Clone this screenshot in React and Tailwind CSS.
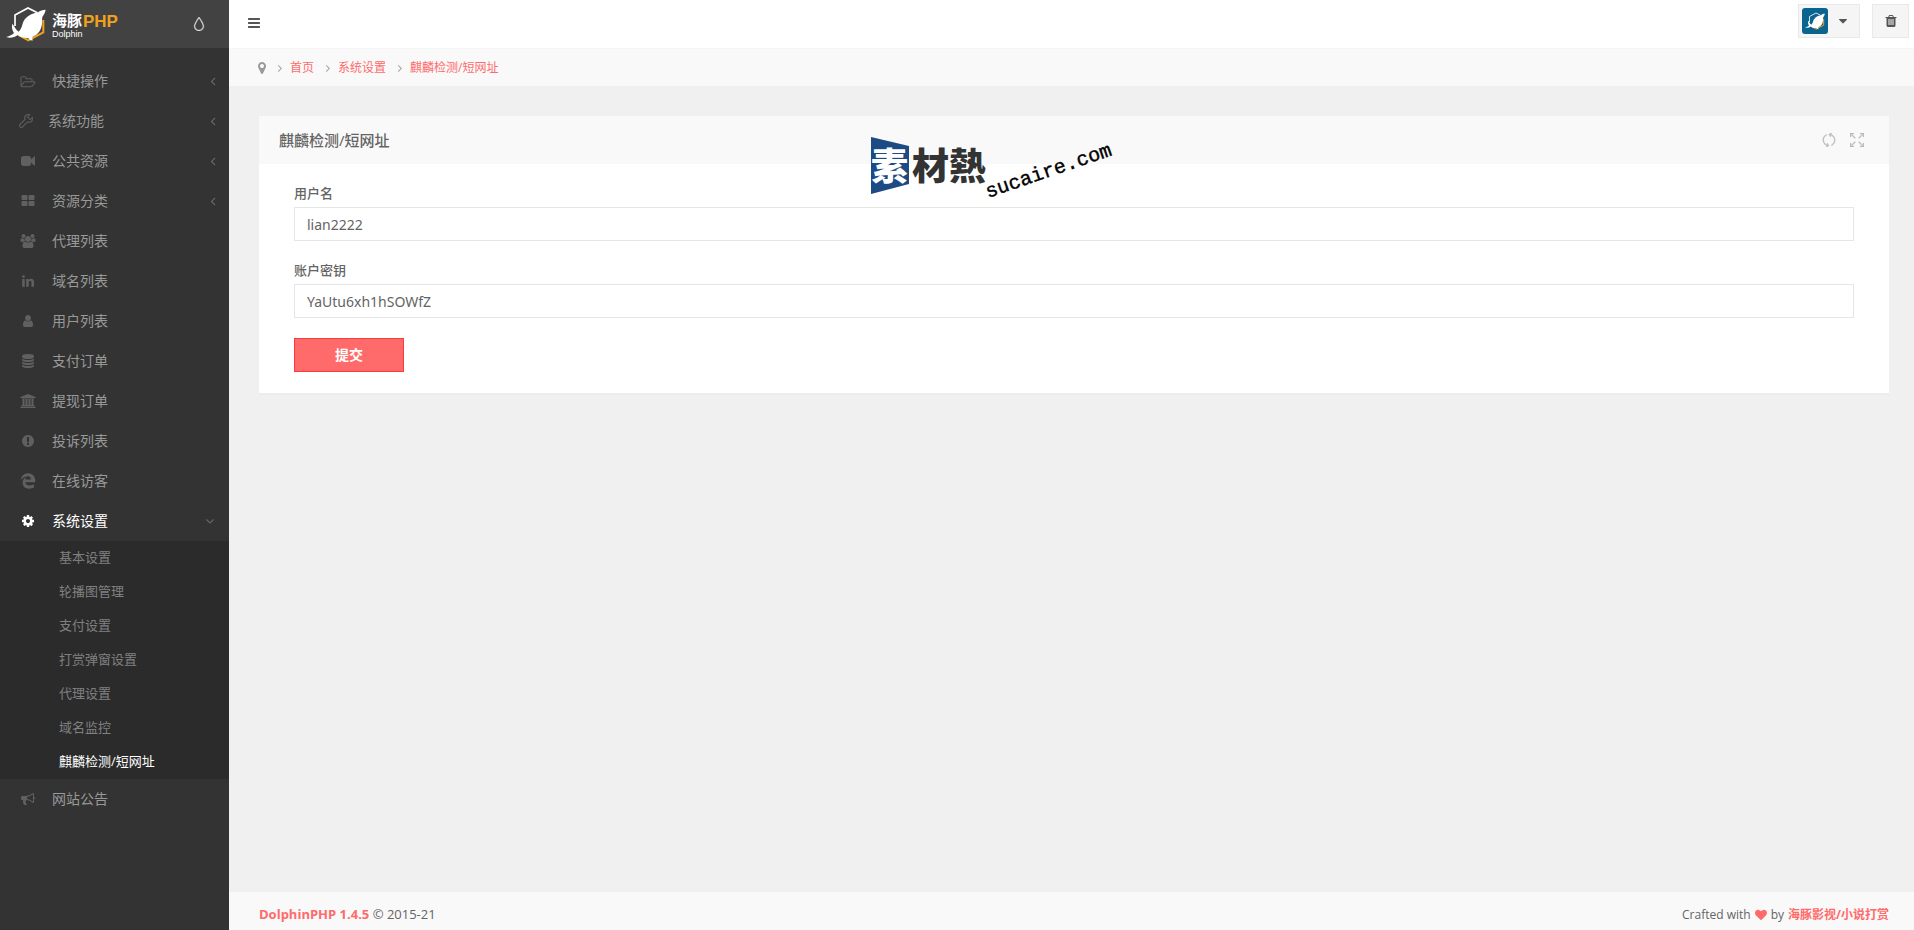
import { FaEdgeLegacy } from 'react-icons/fa';
import { SlDrop, SlRefresh, SlSizeFullscreen, SlWrench } from 'react-icons/sl';

const ICONS = {
  folderOpen:
    'M1781 1077q0-35-53-35h-1088q-40 0-85.5 21.5t-71.5 52.5l-294 363q-18 24-18 40 0 35 53 35h1088q40 0 86-22t71-53l294-363q18-22 18-39zm-1141-163h768v-160q0-40-28-68t-68-28h-576q-40 0-68-28t-28-68v-64q0-40-28-68t-68-28h-320q-40 0-68 28t-28 68v853l256-315q44-53 116-87.5t140-34.5zm1269 163q0 62-46 120l-295 363q-43 53-116 87.5t-140 34.5h-1088q-92 0-158-66t-66-158v-960q0-92 66-158t158-66h320q92 0 158 66t66 158v32h544q92 0 158 66t66 158v160h192q54 0 99 24.5t67 70.5q15 32 15 68z',
  video:
    'M1792 352v1088q0 42-39 59-13 5-25 5-27 0-45-19l-403-403v166q0 119-84.5 203.5t-203.5 84.5h-704q-119 0-203.5-84.5t-84.5-203.5v-704q0-119 84.5-203.5t203.5-84.5h704q119 0 203.5 84.5t84.5 203.5v165l403-402q18-19 45-19 12 0 25 5 39 17 39 59z',
  thLarge:
    'M832 1024v384q0 52-38 90t-90 38h-512q-52 0-90-38t-38-90v-384q0-52 38-90t90-38h512q52 0 90 38t38 90zm0-768v384q0 52-38 90t-90 38h-512q-52 0-90-38t-38-90v-384q0-52 38-90t90-38h512q52 0 90 38t38 90zm896 768v384q0 52-38 90t-90 38h-512q-52 0-90-38t-38-90v-384q0-52 38-90t90-38h512q52 0 90 38t38 90zm0-768v384q0 52-38 90t-90 38h-512q-52 0-90-38t-38-90v-384q0-52 38-90t90-38h512q52 0 90 38t38 90z',
  users:
    'M529 896q-162 5-265 128h-134q-82 0-138-40.5t-56-118.5q0-353 124-353 6 0 43.5 21t97.5 42.5 119 21.5q67 0 133-23-5 37-5 66 0 159 81 256zm1071 637q0 120-73 189.5t-194 69.5h-874q-121 0-194-69.5t-73-189.5q0-53 3.5-103.5t14-109 26.5-108.5 43-97.5 62-81 85.5-53.5 111.5-20q10 0 43 21.5t73 48 107 48 135 21.5 135-21.5 107-48 73-48 43-21.5q61 0 111.5 20t85.5 53.5 62 81 43 97.5 26.5 108.5 14 109 3.5 103.5zm-1024-1277q0 106-75 181t-181 75-181-75-75-181 75-181 181-75 181 75 75 181zm704 384q0 159-112.5 271.5t-271.5 112.5-271.5-112.5-112.5-271.5 112.5-271.5 271.5-112.5 271.5 112.5 112.5 271.5zm576 225q0 78-56 118.5t-138 40.5h-134q-103-123-265-128 81-97 81-256 0-29-5-66 66 23 133 23 59 0 119-21.5t97.5-42.5 43.5-21q124 0 124 353zm-128-609q0 106-75 181t-181 75-181-75-75-181 75-181 181-75 181 75 75 181z',
  linkedin:
    'M477 625v991h-330v-991h330zm21-306q1 73-50.5 122t-135.5 49h-2q-82 0-132-49t-50-122q0-74 51.5-122.5t134.5-48.5 133 48.5 51 122.5zm1166 729v568h-329v-530q0-105-40.5-164.5t-126.5-59.5q-63 0-105.5 34.5t-63.5 85.5q-11 30-11 81v553h-329q2-399 2-647t-1-296l-1-48h329v144h-2q20-32 41-56t56.5-52 87-43.5 114.5-15.5q171 0 275 113.5t104 332.5z',
  user:
    'M1536 1399q0 109-62.5 187t-150.5 78h-854q-88 0-150.5-78t-62.5-187q0-85 8.5-160.5t31.5-152 58.5-131 94-89 134.5-34.5q131 128 313 128t313-128q76 0 134.5 34.5t94 89 58.5 131 31.5 152 8.5 160.5zm-256-887q0 159-112.5 271.5t-271.5 112.5-271.5-112.5-112.5-271.5 112.5-271.5 271.5-112.5 271.5 112.5 112.5 271.5z',
  database:
    'M896 768q237 0 443-43t325-127v170q0 69-103 128t-280 93.5-385 34.5-385-34.5-280-93.5-103-128v-170q119 84 325 127t443 43zm0 768q237 0 443-43t325-127v170q0 69-103 128t-280 93.5-385 34.5-385-34.5-280-93.5-103-128v-170q119 84 325 127t443 43zm0-384q237 0 443-43t325-127v170q0 69-103 128t-280 93.5-385 34.5-385-34.5-280-93.5-103-128v-170q119 84 325 127t443 43zm0-1152q208 0 385 34.5t280 93.5 103 128v128q0 69-103 128t-280 93.5-385 34.5-385-34.5-280-93.5-103-128v-128q0-69 103-128t280-93.5 385-34.5z',
  university:
    'M896 0l960 384v128h-128q0 26-20.5 45t-48.5 19h-1526q-28 0-48.5-19t-20.5-45h-128v-128zm-704 640h256v768h128v-768h256v768h128v-768h256v768h128v-768h256v768h59q28 0 48.5 19t20.5 45v64h-1664v-64q0-26 20.5-45t48.5-19h59v-768zm1595 960q28 0 48.5 19t20.5 45v128h-1920v-128q0-26 20.5-45t48.5-19h1782z',
  exclamation:
    'M896 128q209 0 385.5 103t279.5 279.5 103 385.5-103 385.5-279.5 279.5-385.5 103-385.5-103-279.5-279.5-103-385.5 103-385.5 279.5-279.5 385.5-103zm128 1247v-190q0-14-9-23.5t-22-9.5h-192q-13 0-23 10t-10 23v190q0 13 10 23t23 10h192q13 0 22-9.5t9-23.5zm-2-344l18-621q0-12-10-18-10-8-24-8h-220q-14 0-24 8-10 6-10 18l17 621q0 10 10 17.5t24 7.5h185q14 0 23.5-7.5t10.5-17.5z',
  cog:
    'M1152 896q0-106-75-181t-181-75-181 75-75 181 75 181 181 75 181-75 75-181zm512-109v222q0 12-8 23t-20 13l-185 28q-19 54-39 91 35 50 107 138 10 12 10 25t-9 23q-27 37-99 108t-94 71q-12 0-26-9l-138-108q-44 23-91 38-16 136-29 186-7 28-36 28h-222q-14 0-24.5-8.5t-11.5-21.5l-28-184q-49-16-90-37l-141 107q-10 9-25 9-14 0-25-11-126-114-165-168-7-10-7-23 0-12 8-23 15-21 51-66.5t54-70.5q-27-50-41-99l-183-27q-13-2-21-12.5t-8-23.5v-222q0-12 8-23t19-13l186-28q14-46 39-92-40-57-107-138-10-12-10-24 0-10 9-23 26-36 98.5-107.5t94.5-71.5q13 0 26 10l138 107q44-23 91-38 16-136 29-186 7-28 36-28h222q14 0 24.5 8.5t11.5 21.5l28 184q49 16 90 37l142-107q9-9 24-9 13 0 25 10 129 119 165 170 7 8 7 22 0 12-8 23-15 21-51 66.5t-54 70.5q26 50 41 98l183 28q13 2 21 12.5t8 23.5z',
  bullhorn:
    'M1664 640q53 0 90.5 37.5t37.5 90.5-37.5 90.5-90.5 37.5v384q0 52-38 90t-90 38q-417-347-812-380-58 19-91 66t-31 100.5 40 92.5q-20 33-23 65.5t6 58 33.5 55 48 50 61.5 50.5q-29 58-111.5 83t-168.5 11.5-132-55.5q-7-23-29.5-87.5t-32-94.5-23-89-15-101 3.5-98.5 22-110.5h-122q-66 0-113-47t-47-113v-192q0-66 47-113t113-47h480q435 0 896-384 52 0 90 38t38 90v384zm-128 604v-954q-394 302-768 343v270q377 42 768 341z',
  marker:
    'M1152 640q0-106-75-181t-181-75-181 75-75 181 75 181 181 75 181-75 75-181zm256 0q0 109-33 179l-364 774q-16 33-47.5 52t-67.5 19-67.5-19-46.5-52l-365-774q-33-70-33-179 0-212 150-362t362-150 362 150 150 362z',
  bars:
    'M1664 1344v128q0 26-19 45t-45 19h-1408q-26 0-45-19t-19-45v-128q0-26 19-45t45-19h1408q26 0 45 19t19 45zm0-512v128q0 26-19 45t-45 19h-1408q-26 0-45-19t-19-45v-128q0-26 19-45t45-19h1408q26 0 45 19t19 45zm0-512v128q0 26-19 45t-45 19h-1408q-26 0-45-19t-19-45v-128q0-26 19-45t45-19h1408q26 0 45 19t19 45z',
  angleLeft:
    'M1203 544q0 13-10 23l-393 393 393 393q10 10 10 23t-10 23l-50 50q-10 10-23 10t-23-10l-466-466q-10-10-10-23t10-23l466-466q10-10 23-10t23 10l50 50q10 10 10 23z',
  angleRight:
    'M1171 960q0 13-10 23l-466 466q-10 10-23 10t-23-10l-50-50q-10-10-10-23t10-23l393-393-393-393q-10-10-10-23t10-23l50-50q10-10 23-10t23 10l466 466q10 10 10 23z',
  angleDown:
    'M1395 736q0 13-10 23l-466 466q-10 10-23 10t-23-10l-466-466q-10-10-10-23t10-23l50-50q10-10 23-10t23 10l393 393 393-393q10-10 23-10t23 10l50 50q10 10 10 23z',
  caretDown: 'M1408 704q0 26-19 45l-448 448q-19 19-45 19t-45-19l-448-448q-19-19-19-45t19-45 45-19h896q26 0 45 19t19 45z',
  heart:
    'M896 1664q-26 0-44-18l-624-602q-10-8-27.5-26t-55.5-65.5-68-97.5-53.5-121-23.5-138q0-220 127-344t351-124q62 0 126.5 21.5t120 58 95.5 68.5 76 68q36-36 76-68t95.5-68.5 120-58 126.5-21.5q224 0 351 124t127 344q0 221-229 450l-623 600q-18 18-44 18z',
  trash:
    'M704 1376v-704q0-14-9-23t-23-9h-64q-14 0-23 9t-9 23v704q0 14 9 23t23 9h64q14 0 23-9t9-23zm256 0v-704q0-14-9-23t-23-9h-64q-14 0-23 9t-9 23v704q0 14 9 23t23 9h64q14 0 23-9t9-23zm256 0v-704q0-14-9-23t-23-9h-64q-14 0-23 9t-9 23v704q0 14 9 23t23 9h64q14 0 23-9t9-23zm-544-992h448l-48-117q-7-9-17-11h-317q-10 2-17 11zm928 32v64q0 14-9 23t-23 9h-96v948q0 83-47 143.5t-113 60.5h-832q-66 0-113-58.5t-47-141.5v-952h-96q-14 0-23-9t-9-23v-64q0-14 9-23t23-9h309l70-167q15-37 54-63t79-26h320q40 0 79 26t54 63l70 167h309q14 0 23 9t9 23z',
};

// glyphs whose box is wider or narrower than the square em
const VIEW_BOXES = {
  folderOpen: '64 0 1792 1792',
  marker: '384 0 1024 1792',
  angleLeft: '384 0 1024 1792',
};

const menu = [
  { label: '快捷操作', icon: 'folderOpen', hasChildren: true },
  { label: '系统功能', icon: 'wrench', hasChildren: true },
  { label: '公共资源', icon: 'video', hasChildren: true },
  { label: '资源分类', icon: 'thLarge', hasChildren: true },
  { label: '代理列表', icon: 'users' },
  { label: '域名列表', icon: 'linkedin' },
  { label: '用户列表', icon: 'user' },
  { label: '支付订单', icon: 'database' },
  { label: '提现订单', icon: 'university' },
  { label: '投诉列表', icon: 'exclamation' },
  { label: '在线访客', icon: 'edge' },
  {
    label: '系统设置',
    icon: 'cog',
    hasChildren: true,
    isOpen: true,
    children: ['基本设置', '轮播图管理', '支付设置', '打赏弹窗设置', '代理设置', '域名监控', '麒麟检测/短网址'],
  },
  { label: '网站公告', icon: 'bullhorn' },
];

const crumbs = ['首页', '系统设置', '麒麟检测/短网址'];

function Icon({ name, className = 'size-3.5' }) {
  return (
    <svg
      viewBox={VIEW_BOXES[name] ?? '0 0 1792 1792'}
      fill="currentColor"
      aria-hidden="true"
      className={`shrink-0 overflow-visible ${className}`}
    >
      <path d={ICONS[name]} />
    </svg>
  );
}

function MenuIcon({ name }) {
  if (name === 'wrench') return <SlWrench className="size-3.5 shrink-0 stroke-[24px]" />;
  if (name === 'edge') return <FaEdgeLegacy className="size-4 shrink-0" />;
  return <Icon name={name} />;
}

function DolphinMark({ className }) {
  return (
    <svg viewBox="0 0 120 104" fill="none" aria-hidden="true" className={className}>
      <path d="M27 58V25L66 4l28 14" stroke="#fff" strokeWidth="5" />
      <path d="M112 40v37L67 101 36 84" stroke="#f0a020" strokeWidth="6" />
      <path
        d="M119 9c-9 0-17 3-23 8-19 3-36 13-44 28-4 9-3 18-14 30-8-5-12-16-19-24-3 11 0 20 5 28-6 7-16 10-24 12 12 4 25 2 35-6 8 7 20 10 31 9 3 4 8 8 15 7-3-4-3-7-1-11 17-6 26-21 28-39 1-8 0-14 1-20 4-6 8-12 10-22z"
        fill="#fff"
      />
      <path d="M58 38c7-9 17-14 28-15-8 6-18 11-28 15z" fill="#fff" />
    </svg>
  );
}

function BrandLogo() {
  return (
    <a href="#home" aria-label="海豚PHP Dolphin" className="flex items-center gap-1.5">
      <DolphinMark className="h-9 w-10" />
      <svg viewBox="0 0 70 30" className="h-[30px] w-[70px] overflow-visible">
        <text x="0" y="17" fill="#fff" className="font-['Noto_Sans_CJK_SC',sans-serif] text-[15px] font-bold">
          海豚
        </text>
        <text x="31" y="18" fill="#f0a020" className="font-['Liberation_Sans',sans-serif] text-[17px] font-bold">
          PHP
        </text>
        <text x="0" y="28" fill="#fff" className="font-['Liberation_Sans',sans-serif] text-[9px]">
          Dolphin
        </text>
      </svg>
    </a>
  );
}

function MenuItem({ item }) {
  return (
    <li>
      <a
        href="#menu"
        className={`flex h-10 items-center gap-4 pr-3 pl-5 text-sm ${item.isOpen ? 'text-white' : 'text-[#999]'}`}
      >
        <span
          className={`flex justify-center ${item.icon === 'wrench' ? 'w-3' : 'w-4'} ${
            item.isOpen ? 'text-white' : 'text-[#606060]'
          }`}
        >
          <MenuIcon name={item.icon} />
        </span>
        <span className="flex-1">{item.label}</span>
        {item.hasChildren && (
          <span className="text-[#6c6c6c]">
            {item.isOpen ? <Icon name="angleDown" /> : <Icon name="angleLeft" className="h-3.5 w-2" />}
          </span>
        )}
      </a>
      {item.children && (
        <ul className="bg-[#2b2b2b]">
          {item.children.map((label) => (
            <li key={label}>
              <a
                href="#submenu"
                className={`flex h-[34px] items-center pl-[59px] text-[13px] ${
                  label === '麒麟检测/短网址' ? 'text-white' : 'text-[#808080]'
                }`}
              >
                {label}
              </a>
            </li>
          ))}
        </ul>
      )}
    </li>
  );
}

function Sidebar() {
  return (
    <aside className="w-[229px] shrink-0 bg-[#333]">
      <div className="flex h-12 items-center justify-between bg-[#424242] pr-[23px] pl-[6px]">
        <BrandLogo />
        <button type="button" aria-label="主题" className="text-[#ddd]">
          <SlDrop className="size-3.5 stroke-[24px]" />
        </button>
      </div>
      <nav className="pt-[13px]">
        <ul>
          {menu.map((item) => (
            <MenuItem key={item.label} item={item} />
          ))}
        </ul>
      </nav>
    </aside>
  );
}

function TopBar() {
  return (
    <header className="flex h-12 items-start justify-between bg-white pt-1 pr-[5px] pl-[18px]">
      <button type="button" aria-label="菜单" className="flex h-[38px] items-center text-[#555]">
        <Icon name="bars" />
      </button>
      <div className="flex gap-3">
        <button
          type="button"
          aria-label="账户"
          className="flex h-[34px] w-[62px] items-center gap-2 border border-[#e9e9e9] bg-[#f5f5f5] pl-[3px] text-[#555]"
        >
          <span className="flex size-[26px] items-center justify-center rounded-[3px] bg-[#0a6490]">
            <DolphinMark className="h-[18px] w-5" />
          </span>
          <Icon name="caretDown" />
        </button>
        <button
          type="button"
          aria-label="清空缓存"
          className="flex h-[34px] w-[37px] items-center justify-center border border-[#e9e9e9] bg-[#f5f5f5] text-[#555]"
        >
          <Icon name="trash" />
        </button>
      </div>
    </header>
  );
}

function Breadcrumb() {
  return (
    <nav className="flex h-[38px] items-center border-t border-[#f5f5f5] bg-[#f9f9f9] pl-[29px] text-xs text-[#999]">
      <Icon name="marker" className="h-3.5 w-2" />
      {crumbs.map((label) => (
        <span key={label} className="flex items-center">
          <Icon name="angleRight" className="mr-1 ml-2 size-3" />
          <a href="#crumb" className="text-[#ff6b6b]">
            {label}
          </a>
        </span>
      ))}
    </nav>
  );
}

function Watermark() {
  return (
    <svg
      viewBox="0 0 250 70"
      className="pointer-events-none absolute top-[18px] left-[610px] h-[70px] w-[250px] font-['Noto_Sans_CJK_SC',sans-serif]"
    >
      <path d="M2 3l38 9v38L2 60z" fill="#1c4a85" />
      <g className="text-[37px] font-black">
        <text x="2" y="46" fill="#fff">
          素
        </text>
        <text x="43" y="46" fill="#333">
          材熱
        </text>
      </g>
      <text
        x="0"
        y="0"
        transform="translate(119 64) rotate(-19)"
        fill="#000"
        stroke="#000"
        strokeWidth="0.4"
        className="font-['Liberation_Mono',monospace] text-[20px]"
      >
        sucaire.com
      </text>
    </svg>
  );
}

function Field({ id, label, value }) {
  return (
    <div className="mb-5">
      <label htmlFor={id} className="mb-1 block text-[13px] leading-[19px] font-medium">
        {label}
      </label>
      <input
        id={id}
        type="text"
        defaultValue={value}
        className="block h-[34px] w-full border border-[#e6e6e6] bg-white px-3 font-['Noto_Sans',sans-serif] text-sm text-[#646464] outline-none"
      />
    </div>
  );
}

function SettingsCard() {
  return (
    <section className="relative bg-white shadow-[0_2px_0_rgba(0,0,0,0.01)]">
      <div className="flex h-12 items-center justify-between bg-[#f9f9f9] pr-[25px] pl-5">
        <h1 className="text-[15px] font-medium">麒麟检测/短网址</h1>
        <div className="flex gap-3.5 text-[#bbb]">
          <button type="button" aria-label="刷新">
            <SlRefresh className="size-3.5 stroke-[30px]" />
          </button>
          <button type="button" aria-label="全屏">
            <SlSizeFullscreen className="size-3.5 stroke-[30px]" />
          </button>
        </div>
      </div>
      <form className="px-[35px] pt-5 pb-[21px]">
        <Field id="username" label="用户名" value="lian2222" />
        <Field id="secret" label="账户密钥" value="YaUtu6xh1hSOWfZ" />
        <button
          type="button"
          className="h-[34px] w-[110px] border border-[#ff3838] bg-[#ff6b6b] text-sm font-bold text-white"
        >
          提交
        </button>
      </form>
      <Watermark />
    </section>
  );
}

function Footer() {
  return (
    <footer className="flex h-[38px] items-center justify-between bg-[#f9f9f9] pt-2 pr-[25px] pl-[30px]">
      <p className="text-[13px]">
        <a href="#product" className="font-bold text-[#ff6b6b]">
          DolphinPHP 1.4.5
        </a>{' '}
        © 2015-21
      </p>
      <p className="flex items-center gap-1 text-xs">
        Crafted with
        <span className="text-[#ff6b6b]">
          <Icon name="heart" className="size-3" />
        </span>
        by
        <a href="#author" className="font-bold text-[#ff6b6b]">
          海豚影视/小说打赏
        </a>
      </p>
    </footer>
  );
}

function App() {
  return (
    <div className="flex min-h-screen bg-[#f0f0f0] font-['Open_Sans','Noto_Sans_CJK_SC',sans-serif] text-[#646464]">
      <Sidebar />
      <div className="flex min-w-0 flex-1 flex-col">
        <TopBar />
        <Breadcrumb />
        <main className="flex-1 pt-[30px] pr-[25px] pl-[30px]">
          <SettingsCard />
        </main>
        <Footer />
      </div>
    </div>
  );
}

export default App;
